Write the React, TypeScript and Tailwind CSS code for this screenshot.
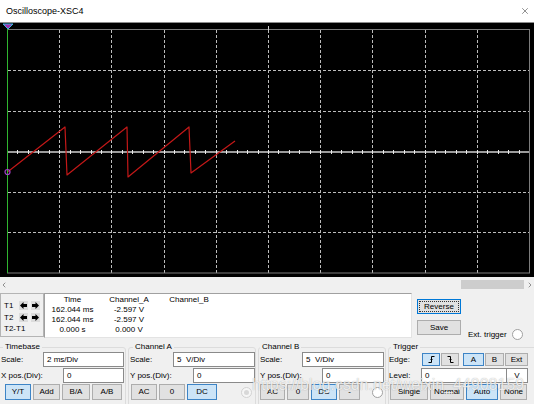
import React from "react";
import { X, ChevronLeft, ChevronRight } from "lucide-react";

const GRID_X = [59, 111, 164, 216, 268, 320, 372, 425, 477];
const GRID_Y = [47, 88, 169, 209];
const WAVE = "7.5,149 65,104 67,152 127,104 128,154 189,104 191,150 235,118";

function Scope() {
  const ticks = Array.from({ length: 49 }, (_, i) => Math.round(7 + (i + 1) * 10.44) + 0.5);
  return (
    <svg width="534" height="254" className="block">
      {GRID_X.map((x) => (
        <line key={x} x1={x + 0.5} x2={x + 0.5} y1="7" y2="250" stroke="#bcbcbc" strokeDasharray="3 2" />
      ))}
      {GRID_Y.map((y) => (
        <line key={y} x1="8" x2="529" y1={y + 0.5} y2={y + 0.5} stroke="#bcbcbc" strokeDasharray="3 2" />
      ))}
      <line x1="8" x2="529" y1="129" y2="129" stroke="#9c9c9c" strokeWidth="2" />
      {ticks.map((x) => (
        <line key={x} x1={x} x2={x} y1="127" y2="131" stroke="#e8e8e8" />
      ))}
      <rect x="7.5" y="6.5" width="522" height="243.5" fill="none" stroke="#7c7c7c" />
      <line x1="268.5" x2="268.5" y1="3" y2="7" stroke="#d0d0d0" />
      <polyline points={WAVE} fill="none" stroke="#c41818" strokeWidth="1.2" strokeLinejoin="round" />
      <line x1="7.5" x2="7.5" y1="5" y2="250" stroke="#2fb52f" />
      <polygon points="3,1 13,1 8,6" fill="#a030b0" stroke="#39b9e0" strokeWidth="1" />
      <circle cx="7.5" cy="149" r="2.5" fill="none" stroke="#a040c8" strokeWidth="1.2" />
    </svg>
  );
}

type BtnProps = { children?: React.ReactNode; w: string; on?: boolean; h?: string };

function Btn({ children, w, on, h = "h-[16px]" }: BtnProps) {
  return (
    <div
      className={`${w} ${h} shrink-0 flex items-center justify-center border ${
        on ? "bg-[#cce4f7] border-[#3d84c6]" : "bg-[#e1e1e1] border-[#adadad]"
      }`}
    >
      {children}
    </div>
  );
}

function Field({ label, labelW, value, className = "" }: { label: string; labelW: string; value: string; className?: string }) {
  return (
    <div className={`flex items-center h-[15px] ${className}`}>
      <span className={`${labelW} shrink-0`}>{label}</span>
      <div className="flex-1 h-full bg-white border border-[#8a8a8a] pl-[3px] flex items-center whitespace-pre">{value}</div>
    </div>
  );
}

function Radio({ dim }: { dim?: boolean }) {
  return (
    <div
      className={`w-[11px] h-[11px] shrink-0 rounded-full border flex items-center justify-center ${
        dim ? "border-[#d2d2d2] bg-[#f6f6f6]" : "border-[#a0a0a0] bg-white"
      }`}
    >
      {dim && <div className="w-[5px] h-[5px] rounded-full bg-[#d8d8d8]" />}
    </div>
  );
}

function Group({ title, className, legendMl, children }: { title: string; className: string; legendMl: string; children: React.ReactNode }) {
  return (
    <fieldset className={`shrink-0 h-[80px] border border-[#dcdcdc] rounded-[3px] ${className}`}>
      <legend className={`${legendMl} px-[2px] leading-[10px]`}>{title}</legend>
      {children}
    </fieldset>
  );
}

function Arrow({ right }: { right?: boolean }) {
  return (
    <div className="w-[9px] h-[9px] bg-[#dcdcdc] flex items-center justify-center">
      <svg width="7" height="7" viewBox="0 0 7 7" className={right ? "rotate-180" : ""}>
        <polygon points="0,3.5 3.5,0 3.5,2 7,2 7,5 3.5,5 3.5,7" fill="#000" />
      </svg>
    </div>
  );
}

function Edge({ falling }: { falling?: boolean }) {
  return (
    <svg width="9" height="9" viewBox="0 0 9 9" fill="none" stroke="#000" strokeWidth="1">
      {falling ? (
        <>
          <path d="M1.5 1.5 H4.5 V7.5 H7.5" />
          <path d="M3.5 4.5 L4.5 5.5 L5.5 4.5" />
        </>
      ) : (
        <>
          <path d="M1.5 7.5 H4.5 V1.5 H7.5" />
          <path d="M3.5 4.5 L4.5 3.5 L5.5 4.5" />
        </>
      )}
    </svg>
  );
}

export default function App() {
  return (
    <div className="relative w-[534px] h-[404px] overflow-hidden bg-[#f0f0f0] text-[8px] leading-[10px] text-black font-['Liberation_Sans',Arial,sans-serif]">
      {/* title bar */}
      <div className="h-[22px] bg-white flex items-center justify-between pl-[6px] pr-[4px]">
        <span className="text-[9px]">Oscilloscope-XSC4</span>
        <X size={10} strokeWidth={1.3} className="text-[#333]" />
      </div>

      {/* screen */}
      <div className="h-[255px] border-t border-[#8c8c8c] bg-black">
        <Scope />
      </div>

      {/* scrollbar */}
      <div className="h-[15px] flex items-center">
        <ChevronLeft size={8} strokeWidth={2} className="text-[#606060]" />
        <div className="ml-auto w-[63px] h-[9px] bg-[#cdcdcd]" />
        <ChevronRight size={8} strokeWidth={2} className="ml-[2px] text-[#606060]" />
      </div>

      {/* cursors / readout */}
      <div className="h-[47px] flex items-start">
        <div className="mt-[1px] w-[44px] h-[44px] shrink-0 border border-[#b4b4b4] pt-[7px] pl-[3px]">
          <div className="flex items-center h-[9px] gap-[3px]">
            <span className="w-[12px]">T1</span>
            <Arrow />
            <Arrow right />
          </div>
          <div className="flex items-center h-[9px] gap-[3px] mt-[3px]">
            <span className="w-[12px]">T2</span>
            <Arrow />
            <Arrow right />
          </div>
          <div className="mt-[2px]">T2-T1</div>
        </div>

        <div className="mt-[1px] w-[368px] h-[45px] shrink-0 bg-white border border-t-[#a0a0a0] border-l-[#a0a0a0] border-r-[#e3e3e3] border-b-[#e3e3e3] pt-[1px] grid grid-cols-[55px_58px_62px] content-start text-center">
          <span>Time</span>
          <span>Channel_A</span>
          <span>Channel_B</span>
          <span>162.044 ms</span>
          <span>-2.597 V</span>
          <span />
          <span>162.044 ms</span>
          <span>-2.597 V</span>
          <span />
          <span>0.000 s</span>
          <span>0.000 V</span>
          <span />
        </div>

        <div className="ml-[5px] flex">
          <div className="flex flex-col pt-[7px] gap-[6px]">
            <div className="w-[44px] h-[15px] bg-[#e1e1e1] border border-[#0078d7] p-[1px]">
              <div className="w-full h-full border border-dotted border-[#333] flex items-center justify-center">Reverse</div>
            </div>
            <Btn w="w-[44px]" h="h-[15px]">Save</Btn>
          </div>
          <div className="ml-[7px] pt-[37px] flex items-center gap-[5px]">
            <span>Ext. trigger</span>
            <Radio />
          </div>
        </div>
      </div>

      {/* control groups */}
      <div className="flex items-start gap-[2px] pt-[3px]">
        <Group title="Timebase" className="ml-[-3px] w-[129px] pl-[3px] pr-[1px]" legendMl="ml-[2px]">
          <Field label="Scale:" labelW="w-[42px]" value="2 ms/Div" />
          <Field label="X pos.(Div):" labelW="w-[62px]" value="0" className="mt-[1px]" />
          <div className="flex gap-[2px] mt-[1px] ml-[4px]">
            <Btn w="w-[26px]" on>Y/T</Btn>
            <Btn w="w-[27px]">Add</Btn>
            <Btn w="w-[28px]">B/A</Btn>
            <Btn w="w-[30px]">A/B</Btn>
          </div>
        </Group>

        <Group title="Channel A" className="w-[128px] pl-[1px]" legendMl="ml-[3px]">
          <Field label="Scale:" labelW="w-[43px]" value="5  V/Div" />
          <Field label="Y pos.(Div):" labelW="w-[63px]" value="0" className="mt-[1px]" />
          <div className="flex items-center gap-[2px] mt-[1px] ml-[1px] pr-[3px]">
            <Btn w="w-[26px]">AC</Btn>
            <Btn w="w-[26px]">0</Btn>
            <Btn w="w-[30px]" on>DC</Btn>
            <div className="ml-auto">
              <Radio dim />
            </div>
          </div>
        </Group>

        <Group title="Channel B" className="w-[128px] pl-[1px] pr-[1px]" legendMl="ml-0">
          <Field label="Scale:" labelW="w-[42px]" value="5  V/Div" />
          <Field label="Y pos.(Div):" labelW="w-[62px]" value="0" className="mt-[1px]" />
          <div className="flex items-center gap-[2px] mt-[1px] pr-[1px]">
            <Btn w="w-[25px]">AC</Btn>
            <Btn w="w-[22px]">0</Btn>
            <Btn w="w-[26px]" on>DC</Btn>
            <Btn w="w-[21px]">-</Btn>
            <div className="ml-auto">
              <Radio />
            </div>
          </div>
        </Group>

        <Group title="Trigger" className="w-[150px]" legendMl="ml-[2px]">
          <div className="flex items-center h-[15px]">
            <span className="w-[33px] shrink-0">Edge:</span>
            <div className="flex gap-[1px]">
              <Btn w="w-[18px]" h="h-[13px]" on>
                <Edge />
              </Btn>
              <Btn w="w-[18px]" h="h-[13px]">
                <Edge falling />
              </Btn>
            </div>
            <div className="flex gap-[1px] ml-[4px]">
              <Btn w="w-[21px]" h="h-[13px]" on>A</Btn>
              <Btn w="w-[19px]" h="h-[13px]">B</Btn>
              <Btn w="w-[23px]" h="h-[13px]">Ext</Btn>
            </div>
          </div>
          <div className="flex items-center h-[15px] mt-[1px]">
            <span className="w-[32px] shrink-0">Level:</span>
            <div className="w-[86px] h-full bg-white border border-[#8a8a8a] pl-[3px] flex items-center">0</div>
            <div className="w-[21px] h-full bg-white border border-l-0 border-[#8a8a8a] flex items-center justify-center">V</div>
          </div>
          <div className="flex gap-[2px] mt-[1px] ml-[1px]">
            <Btn w="w-[38px]">Single</Btn>
            <Btn w="w-[34px]">Normal</Btn>
            <Btn w="w-[32px]" on>Auto</Btn>
            <Btn w="w-[27px]">None</Btn>
          </div>
        </Group>
      </div>

      {/* watermark */}
      <div className="absolute left-[252px] top-[376px] text-[16px] leading-[18px] text-white/80 [text-shadow:0_0_1px_rgba(0,0,0,0.35)] pointer-events-none">
        https://blog.csdn.net/weixin_44908159
      </div>
    </div>
  );
}
